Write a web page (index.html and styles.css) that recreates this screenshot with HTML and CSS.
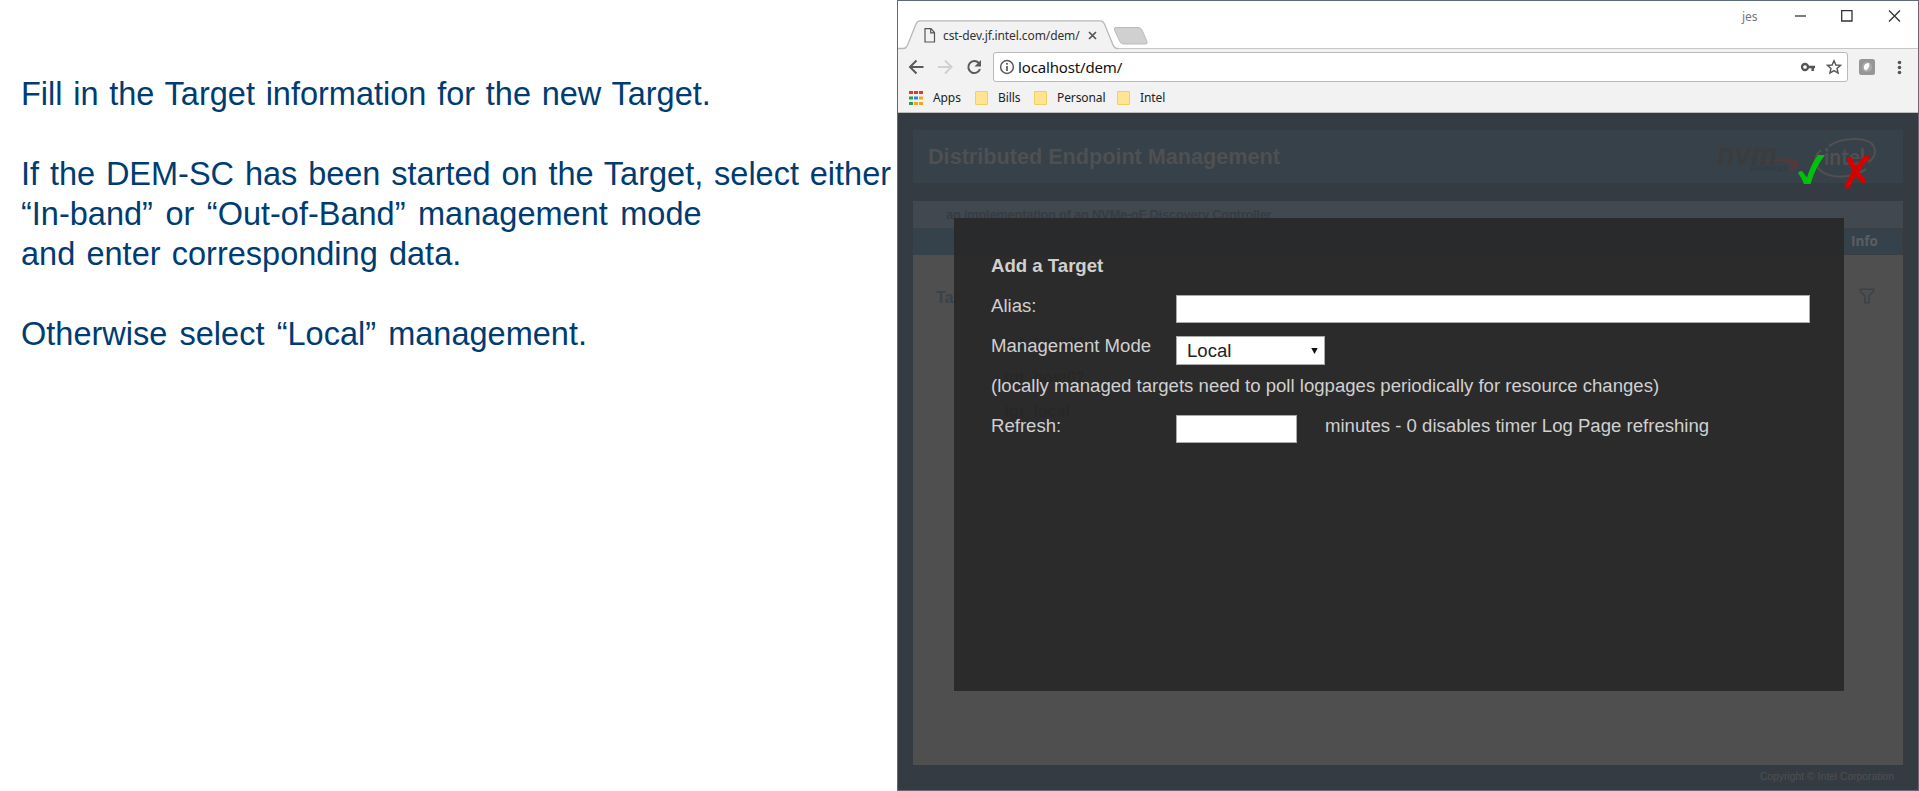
FILE: index.html
```html
<!DOCTYPE html>
<html lang="en">
<head>
<meta charset="utf-8">
<title>Add a Target</title>
<link rel="stylesheet" href="styles.css">
</head>
<body>
<div class="slide">
  <section class="notes">
    <p><span class="line l1">Fill in the Target information for the new Target.</span></p>
    <p><span class="line l2">If the DEM-SC has been started on the Target, select either</span><span class="line l3">“In-band” or “Out-of-Band” management mode</span><span class="line l4">and enter corresponding data.</span></p>
    <p><span class="line l5">Otherwise select “Local” management.</span></p>
  </section>

  <section class="window">
    <header class="tabstrip">
      <div class="tab">
        <svg class="tab-shape" width="252" height="30" viewBox="0 0 252 30"><path d="M-1 29H6C9 29 10 25 11 23L17 5Q19 .8 22 .8H202Q205 .8 207 5L215 24Q217 29 220 29.200V30H-1Z" fill="#f2f2f2"/><path d="M-1 28.500H5C8 28.500 9 27 10 24L18 4Q19.500 .8 22 .8H202Q205 .8 206.500 4L215 25Q216.500 28.500 220 28.500" fill="none" stroke="#b8b8b8" stroke-width="1.300"/><path d="M218 7.500H240Q243 7.500 244 10L249 21.500Q250 24 247 24H226Q223 24 222 22L216.500 10Q215.500 7.500 218 7.500Z" fill="#d0d0d0" stroke="#bcbcbc"/></svg>
        <svg class="doc" width="12" height="15" viewBox="0 0 12 15" fill="none" stroke="#555" stroke-width="1.200"><path d="M1 .7H7L10.500 4.500V14H1ZM6.700 .7V4.800H10.500"/></svg>
        <span class="tab-title">cst-dev.jf.intel.com/dem/</span>
        <svg class="tab-close" width="9" height="9" viewBox="0 0 9 9"><path d="M1 1L8 8M8 1L1 8" stroke="#555" stroke-width="1.700"/></svg>
      </div>
      <div class="controls">
        <span class="user">jes</span>
        <svg width="106" height="12" viewBox="0 0 106 12" fill="none" stroke="#333" stroke-width="1.300"><path d="M0 6H11"/><path d="M46.700 .7H57V11H46.700Z"/><path d="M94 .5L105 11.500M105 .5L94 11.500"/></svg>
      </div>
    </header>

    <div class="toolbar">
      <svg class="nav" width="80" height="20" viewBox="0 0 80 20" fill="none" stroke-width="2"><path d="M16.500 10H3M9.500 3.500L3 10L9.500 16.500" stroke="#5a5a5a"/><path d="M31 10H44.500M38 3.500L44.500 10L38 16.500" stroke="#d0d0d0"/><path d="M71.800 6A6 6 0 1 0 73 12" stroke="#5a5a5a"/><path d="M74 3V9.500H67.500Z" fill="#5a5a5a"/></svg>
      <div class="omnibox">
        <svg width="16" height="16" viewBox="0 0 16 16"><circle cx="8" cy="8" r="6.400" fill="none" stroke="#5a5a5a" stroke-width="1.500"/><path d="M8 4V5.700M8 7V12" stroke="#5a5a5a" stroke-width="1.700"/></svg>
        <span class="url">localhost/dem/</span>
        <svg class="key" width="42" height="16" viewBox="0 0 42 16"><circle cx="5" cy="8" r="3" fill="none" stroke="#555" stroke-width="2.300"/><path d="M8 8H15M12.700 8V12" stroke="#555" stroke-width="2.500"/><path d="M34 1.800L35.900 6L40.500 6.400L37 9.400L38.100 14L34 11.600L29.900 14L31 9.400L27.500 6.400L32.100 6Z" fill="none" stroke="#555" stroke-width="1.400"/></svg>
      </div>
      <svg class="ext" width="48" height="18" viewBox="0 0 48 18"><rect x="1" y="1" width="16" height="16" rx="2.500" fill="#969696"/><circle cx="9" cy="9" r="5" fill="#aaa"/><path d="M6 11Q5 5 11 5Q12.500 9 8 12.500Z" fill="#fff"/><g fill="#555"><circle cx="41.500" cy="4.500" r="1.800"/><circle cx="41.500" cy="9.500" r="1.800"/><circle cx="41.500" cy="14.500" r="1.800"/></g></svg>
    </div>

    <nav class="bookmarks">
      <svg width="14" height="14" viewBox="0 0 14 14"><path d="M0 0h4v3H0zM5 0h4v3H5zM10 0h4v3h-4z" fill="#e8352c"/><path d="M0 5.500h4v3H0zM0 11h4v3H0z" fill="#2b9b50"/><path d="M5 5.500h4v3H5z" fill="#2b83ea"/><path d="M10 5.500h4v3h-4zM5 11h4v3H5zM10 11h4v3h-4z" fill="#f2a713"/></svg>
      <span class="b1">Apps</span><i class="folder"></i><span class="b2">Bills</span><i class="folder"></i><span class="b3">Personal</span><i class="folder"></i><span class="b4">Intel</span>
    </nav>

    <main class="page">
      <div class="banner">
        <h1>Distributed Endpoint Management</h1>
        <svg class="logos" width="162" height="44" viewBox="0 0 162 44">
          <path d="M30 25Q74 16 81 24Q86 31 69 33Q77 28 72 25Q65 21 30 25Z" fill="#503a3e"/>
          <text class="nvm" x="0" y="27" textLength="60" lengthAdjust="spacingAndGlyphs">nvm</text>
          <text class="express" x="33" y="33" textLength="38">EXPRESS</text>
          <path d="M112 8C127 -2 153 -1 157 9C160 17 155 22 151 24M104 12C94 20 98 35 116 38C128 40 141 37 149 31" fill="none" stroke="#514f50" stroke-width="2.200"/>
          <text class="intel" x="107" y="27" textLength="41" lengthAdjust="spacingAndGlyphs">intel</text>
        </svg>
      </div>
      <div class="subtitle"><span>an implementation of an NVMe-oF Discovery Controller</span></div>
      <div class="menu"><span class="objects">Objects</span><span class="info">Info</span></div>
      <div class="content">
        <div class="list">
          <h2>Targets</h2>
          <ul><li>tgt_host01</li><li>tgt_host02</li><li>tgt_local</li></ul>
        </div>
        <svg class="filter" width="16" height="16" viewBox="0 0 16 16"><path d="M1.200 1.200H14.800V3L10 8V14.800H6V8L1.200 3Z" fill="none" stroke="#39424a" stroke-width="1.500"/></svg>
      </div>
      <footer><span>Copyright © Intel Corporation</span></footer>

      <form class="dialog">
        <h3><span>Add a Target</span></h3>
        <div class="row"><label>Alias:</label><div class="field alias"></div></div>
        <div class="row"><label>Management Mode</label><div class="field select"><span>Local</span><svg width="7" height="6" viewBox="0 0 7 6"><path d="M.3 0H6.700L3.500 6Z" fill="#111"/></svg></div></div>
        <div class="row"><span class="hint">(locally managed targets need to poll logpages periodically for resource changes)</span></div>
        <div class="row"><label>Refresh:</label><div class="field refresh"></div><span class="minutes">minutes - 0 disables timer Log Page refreshing</span></div>
      </form>
      <svg class="actions" width="76" height="36" viewBox="0 0 76 36" fill="none" stroke-linecap="round" stroke-linejoin="round"><path d="M1 19Q2 17 5 17L10 23.500Q14 10 21 1H28Q18 14 13.500 30H7Q5 24 1 19Z" fill="#00c20a"/><path d="M53 5.500Q57 17 66 26.500" stroke="#d60000" stroke-width="5.200"/><path d="M70 3.500Q58 15 50.500 32" stroke="#d60000" stroke-width="5.200"/></svg>
    </main>
  </section>
</div>
</body>
</html>
```
FILE: styles.css
```css
* { box-sizing: border-box; }
body { margin: 0; background: #fff; font-family: "Liberation Sans", Arial, sans-serif; overflow: hidden; }
h1, h2, h3, p, ul { margin: 0; padding: 0; }
svg { display: block; flex: none; }
.slide { display: flex; width: 1919px; height: 791px; }

.notes { width: 897px; padding: 74px 0 0 21px; color: #003c71; font-size: 32.500px; line-height: 40px; }
.notes p { margin-bottom: 40px; }
.line { display: block; width: max-content; white-space: nowrap; }
.l1 { word-spacing: 1.700px; }
.l2 { word-spacing: 1.800px; }
.l3 { word-spacing: 3.500px; }
.l4 { word-spacing: 2.200px; }
.l5 { word-spacing: 3.200px; }

.window { width: 1022px; height: 791px; border: 1px solid #5f6b79; display: flex; flex-direction: column; background: #f2f2f2; }
.tabstrip { height: 48px; background: #fff; border-bottom: 1px solid #c6c6c6; display: flex; justify-content: space-between; }
.tab { position: relative; display: flex; align-items: center; width: 260px; height: 30px; margin-top: 19px; padding-left: 26px; }
.tab-shape { position: absolute; left: 0; top: 0; }
.doc, .tab-title, .tab-close { position: relative; }
.tab-title { margin-left: 7px; width: 137px; white-space: nowrap; font: 12px "Noto Sans", sans-serif; letter-spacing: -.1px; color: #333; }
.tab-close { margin-left: 8px; margin-top: 1px; }
.controls { display: flex; padding: 9px 17px 0 0; }
.user { font: 12px/14px "Noto Sans", sans-serif; color: #777; width: 53px; }
.toolbar { height: 35px; display: flex; align-items: center; padding: 0 7px 0 9px; }
.omnibox { display: flex; align-items: center; margin-left: 6px; width: 855px; height: 30px; border: 1px solid #b9b9b9; border-radius: 3px; background: #fff; padding-left: 5px; }
.url { font: 15px "Noto Sans", sans-serif; letter-spacing: -.15px; color: #111; margin-left: 3px; }
.key { margin-left: auto; margin-right: 5px; }
.ext { margin-left: 10px; }
.bookmarks { height: 29px; border-bottom: 1px solid #bdbdbd; display: flex; align-items: center; padding: 0 0 1px 11px; font: 12px "Noto Sans", sans-serif; letter-spacing: -.1px; color: #222; }
.bookmarks span { margin-left: 10px; }
.b1 { width: 32px; } .b2 { width: 26px; } .b3 { width: 50px; }
.folder { width: 13px; height: 14px; margin-left: 10px; border: 1px solid #f0cf63; border-radius: 1px; background: #ffe494; }

.page { position: relative; flex: 1; background: #353b43; padding: 17px 15px 0; }
.banner { height: 53px; background: #374149; display: flex; justify-content: space-between; padding: 0 24px 0 15px; }
h1 { font-size: 21.630px; line-height: 53px; color: #4f5051; }
.logos { margin-top: 8px; overflow: visible; }
.nvm { font: italic bold 31px "Liberation Sans", sans-serif; fill: #3b3c3d; }
.express { font: italic 8px "Liberation Sans", sans-serif; fill: #30393f; }
.intel { font: bold 22px Lato, sans-serif; fill: #514f50; }
.subtitle { margin-top: 18px; height: 27px; padding-left: 33px; background: #41484f; color: #363c43; font-size: 13px; letter-spacing: -.3px; font-weight: bold; line-height: 27px; }
.menu { height: 27px; display: flex; justify-content: flex-end; background: #36424b; font: bold 13.500px/26px "Open Sans", sans-serif; color: #5b5e60; }
.objects { width: 76px; color: #30363b; }
.info { width: 65px; padding-left: 12px; border: 1px solid #3a3e41; line-height: 25px; }
.content { height: 510px; background: #4f4f4f; display: flex; justify-content: space-between; padding: 33px 28px 0 23px; }
h2 { font-size: 16px; line-height: 20px; color: #39424a; }
.list ul { list-style: none; padding: 19px 0 0 68px; color: #111; font-weight: bold; font-size: 16px; line-height: 34px; }
footer { padding: 5px 9px 0; text-align: right; font-size: 10.350px; line-height: 14px; color: #4f5051; }

.dialog { position: absolute; left: 56px; top: 105px; width: 890px; height: 473px; padding: 28px 0 0 37px; background: rgba(41, 41, 41, .95); color: #d0d0d0; font-size: 18.580px; }
.dialog h3 { font-size: 18.600px; line-height: 40px; height: 41px; }
.row { height: 40px; display: flex; align-items: flex-start; line-height: 38px; white-space: nowrap; }
.row label { width: 185px; }
.field { background: #fff; border: 1px solid #aaa; height: 28px; margin-top: 8px; }
.alias { width: 634px; }
.select { width: 149px; height: 29px; margin-top: 9px; display: flex; align-items: center; justify-content: space-between; padding: 0 6px 0 10px; color: #222; line-height: 27px; }
.refresh { width: 121px; margin-top: 8px; }
.minutes { margin-left: 28px; }
.actions { position: absolute; left: 899px; top: 41px; }
```
